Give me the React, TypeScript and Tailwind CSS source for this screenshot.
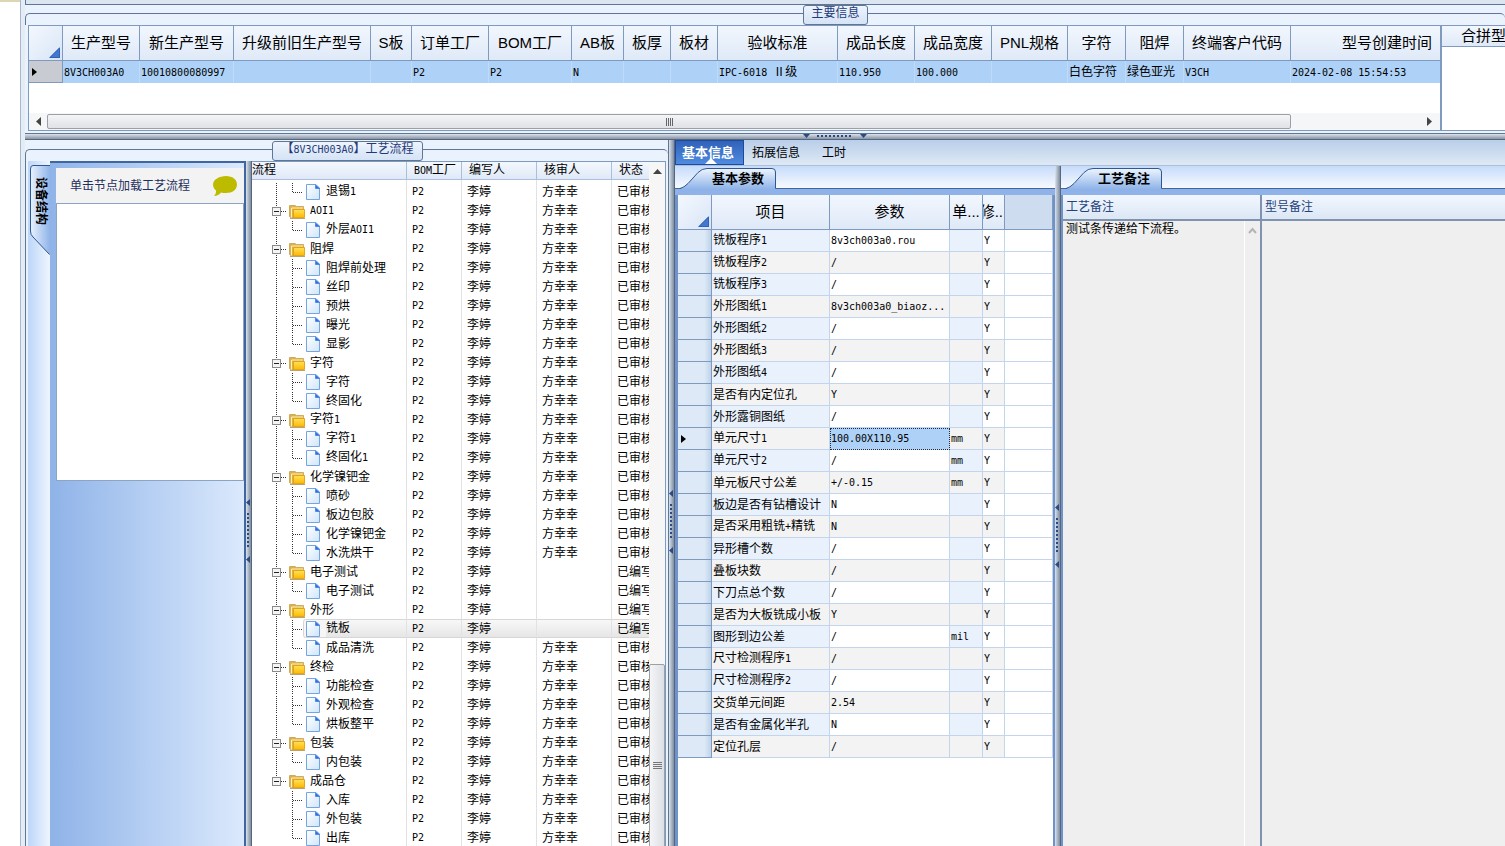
import React from "react";

const CJK = "font-['Liberation_Sans','Noto_Sans_CJK_SC',sans-serif]";
const LINE = "border-[#7f9abf]";

/** Chinese text at 12px with Latin runs in a narrow fixed-width face. */
function Mixed({ children }: { children: string }) {
  const parts = children.split(/([\x20-\x7e]+)/).filter(Boolean);
  return (
    <>
      {parts.map((p, i) =>
        /^[\x20-\x7e]+$/.test(p) ? (
          <span key={i} className="font-['DejaVu_Sans_Mono',monospace] text-[10px] whitespace-pre">
            {p}
          </span>
        ) : (
          <span key={i}>{p}</span>
        ),
      )}
    </>
  );
}

function Corner() {
  return (
    <div className="flex h-full items-end justify-end p-[2px]">
      <svg width="11" height="11" viewBox="0 0 11 11" aria-hidden="true">
        <path d="M11 0V11H0Z" fill="#4478d0" />
        <path d="M10.5 1V10.5H1Z" fill="none" stroke="#2f62bb" />
      </svg>
    </div>
  );
}

function RowMarker() {
  return (
    <svg width="5" height="8" viewBox="0 0 5 8" aria-hidden="true">
      <path d="M0 0L5 4L0 8Z" fill="#000" />
    </svg>
  );
}

function CaptionBar({ title, className }: { title: string; className: string }) {
  return (
    <div className="relative flex h-[20px] shrink-0">
      <div className="absolute inset-x-0 top-[8px] bottom-0 rounded-t-[5px] border-t border-l border-[#5f7794]" />
      <h2
        className={`relative flex h-5 justify-center rounded-[3px] border border-[#5f7794] bg-linear-to-b from-[#edf4fd] to-[#d5e3f5] text-[12px] leading-[14px] whitespace-nowrap text-[#1f3a78] ${className}`}
      >
        <span>
          <Mixed>{title}</Mixed>
        </span>
      </h2>
    </div>
  );
}

function VSplitter({ grip }: { grip: string }) {
  return (
    <div
      role="separator"
      aria-orientation="vertical"
      className="flex w-[6px] shrink-0 justify-center border-r border-[#56677d] bg-linear-to-r from-[#dce3eb] via-[#aab6c4] to-[#7f8d9f]"
    >
      <svg width="5" height="64" viewBox="0 0 5 64" className={`shrink-0 ${grip}`} aria-hidden="true">
        <path d="M4 0V7L0 3.5ZM4 57V64L0 60.5Z" fill="#2b4a84" />
        <path d="M2 14V50" stroke="#2b4a84" strokeWidth="2" strokeDasharray="2 2" />
      </svg>
    </div>
  );
}

const mainColumns: { name: string; col: string; value: string }[] = [
  { name: "生产型号", col: "w-[77px]", value: "8V3CH003A0" },
  { name: "新生产型号", col: "w-[94px]", value: "10010800080997" },
  { name: "升级前旧生产型号", col: "w-[137px]", value: "" },
  { name: "S板", col: "w-[41px]", value: "" },
  { name: "订单工厂", col: "w-[77px]", value: "P2" },
  { name: "BOM工厂", col: "w-[83px]", value: "P2" },
  { name: "AB板", col: "w-[52px]", value: "N" },
  { name: "板厚", col: "w-[47px]", value: "" },
  { name: "板材", col: "w-[47px]", value: "" },
  { name: "验收标准", col: "w-[120px]", value: "IPC-6018 Ⅱ级" },
  { name: "成品长度", col: "w-[77px]", value: "110.950" },
  { name: "成品宽度", col: "w-[77px]", value: "100.000" },
  { name: "PNL规格", col: "w-[76px]", value: "" },
  { name: "字符", col: "w-[58px]", value: "白色字符" },
  { name: "阻焊", col: "w-[58px]", value: "绿色亚光" },
  { name: "终端客户代码", col: "w-[107px]", value: "V3CH" },
  { name: "型号创建时间", col: "w-[149px]", value: "2024-02-08 15:54:53" },
];

function MainInfo() {
  return (
    <section className="flex shrink-0 flex-col border-t border-b border-[#5f7794] bg-[#eaf3fd]">
      <CaptionBar title="主要信息" className="ml-[778px] w-[65px]" />
      <div className="flex h-[106px] overflow-hidden pl-[3px]">
        <div className={`flex w-[1414px] shrink-0 flex-col border border-r-2 bg-white ${LINE}`}>
          <table className="w-[1411px] table-fixed border-separate border-spacing-0">
            <colgroup>
              <col className="w-[34px]" />
              {mainColumns.map((c) => (
                <col key={c.name} className={c.col} />
              ))}
            </colgroup>
            <thead>
              <tr className="h-[35px]">
                <th className={`h-[35px] border-r border-b bg-linear-to-br from-[#f4f8fe] to-[#d8e5f6] p-0 ${LINE}`}>
                  <Corner />
                </th>
                {mainColumns.map((c, i) => (
                  <th
                    key={c.name}
                    className={`h-[35px] border-r border-b bg-linear-to-b from-[#f2f7fe] to-[#dfe9f7] p-0 text-[15px] leading-5 font-normal whitespace-nowrap last:border-r-0 ${LINE} ${
                      i === mainColumns.length - 1 ? "pr-2 text-right" : "text-center"
                    }`}
                  >
                    {c.name}
                  </th>
                ))}
              </tr>
            </thead>
            <tbody>
              <tr>
                <td className={`h-[22px] border-r border-b bg-[#c8ccd2] p-0 pl-[3px] ${LINE}`}>
                  <RowMarker />
                </td>
                {mainColumns.map((c) => (
                  <td
                    key={c.name}
                    className="h-[22px] border-r border-[#c0dbf8] bg-[#aed2f7] p-0 pl-px text-[12px] leading-4 whitespace-nowrap last:border-r-0"
                  >
                    <Mixed>{c.value}</Mixed>
                  </td>
                ))}
              </tr>
            </tbody>
          </table>
          <div className="flex-1" />
          <div className="flex h-[17px] items-stretch bg-[#f5f6f8]">
            <button aria-label="向左滚动" className="flex w-[18px] items-center justify-center">
              <svg width="5" height="9" viewBox="0 0 5 9" aria-hidden="true">
                <path d="M5 0V9L0 4.500Z" fill="#444" />
              </svg>
            </button>
            <div className="my-px flex w-[1244px] items-center justify-center gap-px rounded-[2px] border border-[#9aa0a8] bg-linear-to-b from-[#f4f5f7] to-[#dfe2e6]">
              {[0, 1, 2, 3].map((i) => (
                <i key={i} className="h-2 w-px bg-[#666]" />
              ))}
            </div>
            <div className="flex-1" />
            <button aria-label="向右滚动" className="flex w-[21px] items-center justify-center">
              <svg width="5" height="9" viewBox="0 0 5 9" aria-hidden="true">
                <path d="M0 0V9L5 4.500Z" fill="#444" />
              </svg>
            </button>
          </div>
        </div>
        <div className={`min-w-0 flex-1 overflow-hidden border-t border-b bg-white ${LINE}`}>
          <div className={`h-[21px] border-b bg-linear-to-b from-[#f2f7fe] to-[#dfe9f7] pl-[19px] text-[15px] leading-5 whitespace-nowrap ${LINE}`}>
            合拼型号
          </div>
        </div>
      </div>
      <div className="h-[2px]" />
    </section>
  );
}

function HSplitter() {
  return (
    <div
      role="separator"
      aria-orientation="horizontal"
      className="flex h-[6px] shrink-0 items-center border-b border-[#56677d] bg-linear-to-b from-[#dce3eb] to-[#8894a4] pl-[778px]"
    >
      <svg width="64" height="5" viewBox="0 0 64 5" aria-hidden="true">
        <path d="M0 0H7L3.500 4ZM57 0H64L60.500 4Z" fill="#2b4a84" />
        <path d="M14 2H50" stroke="#2b4a84" strokeWidth="2" strokeDasharray="2 2" />
      </svg>
    </div>
  );
}

type Step = { name: string; group?: boolean; reviewer?: string; status?: string; selected?: boolean };

const R = "方幸幸";
const steps: Step[] = [
  { name: "退锡1", reviewer: R },
  { name: "AOI1", group: true, reviewer: R },
  { name: "外层AOI1", reviewer: R },
  { name: "阻焊", group: true, reviewer: R },
  { name: "阻焊前处理", reviewer: R },
  { name: "丝印", reviewer: R },
  { name: "预烘", reviewer: R },
  { name: "曝光", reviewer: R },
  { name: "显影", reviewer: R },
  { name: "字符", group: true, reviewer: R },
  { name: "字符", reviewer: R },
  { name: "终固化", reviewer: R },
  { name: "字符1", group: true, reviewer: R },
  { name: "字符1", reviewer: R },
  { name: "终固化1", reviewer: R },
  { name: "化学镍钯金", group: true, reviewer: R },
  { name: "喷砂", reviewer: R },
  { name: "板边包胶", reviewer: R },
  { name: "化学镍钯金", reviewer: R },
  { name: "水洗烘干", reviewer: R },
  { name: "电子测试", group: true, status: "已编写" },
  { name: "电子测试", status: "已编写" },
  { name: "外形", group: true, status: "已编写" },
  { name: "铣板", status: "已编写", selected: true },
  { name: "成品清洗", reviewer: R },
  { name: "终检", group: true, reviewer: R },
  { name: "功能检查", reviewer: R },
  { name: "外观检查", reviewer: R },
  { name: "烘板整平", reviewer: R },
  { name: "包装", group: true, reviewer: R },
  { name: "内包装", reviewer: R },
  { name: "成品仓", group: true, reviewer: R },
  { name: "入库", reviewer: R },
  { name: "外包装", reviewer: R },
  { name: "出库", reviewer: R },
];
const lastGroup = steps.map((s) => !!s.group).lastIndexOf(true);

function GroupLead({ last }: { last: boolean }) {
  return (
    <svg width="58" height="19" viewBox="0 0 58 19" aria-hidden="true">
      <path d={last ? "M24.500 0V9" : "M24.500 0V19"} stroke="#333" strokeDasharray="1 1" />
      <path d="M29 10.500H35" stroke="#333" strokeDasharray="1 1" />
      <rect x="20.500" y="6.500" width="8" height="8" fill="#f4f4f4" stroke="#8b8b8b" />
      <path d="M22 10.500H27" stroke="#222" />
      <path d="M37.500 15.500V4.500H43L44.500 5.500H51.500V9H42V16.500H38.500Z" fill="#dcb04a" stroke="#c9a04a" strokeWidth=".8" />
      <path d="M39.500 16.500V7H51" fill="none" stroke="#fff3b8" />
      <path d="M41.500 8.500H52.500V16.500H41.500Z" fill="url(#folderFront)" stroke="#e0a010" strokeWidth=".9" />
      <path d="M38 17.500H53" stroke="#a88a55" strokeWidth=".8" />
    </svg>
  );
}

function LeafLead({ end, root, selected }: { end: boolean; root: boolean; selected: boolean }) {
  return (
    <svg width="74" height="19" viewBox="0 0 74 19" className="shrink-0" aria-hidden="true">
      {selected && (
        <>
          <path d="M74 .5H53.500Q51.500 .5 51.500 2.500V16.500Q51.500 18.500 53.500 18.500H74Z" fill="#f6f6f6" />
          <path d="M74 .5H53.500Q51.500 .5 51.500 2.500V16.500Q51.500 18.500 53.500 18.500H74" fill="none" stroke="#d6d6d6" />
        </>
      )}
      {root && <path d="M24.500 1V19" stroke="#333" strokeDasharray="1 1" />}
      <path d={end ? "M40.500 1V11" : "M40.500 1V19"} stroke="#333" strokeDasharray="1 1" />
      <path d="M41 10.500H51" stroke="#333" strokeDasharray="1 1" />
      <path d="M54.500 2.500H64L67.500 6V17.500H54.500Z" fill="url(#pageFill)" stroke="#74a5e2" />
      <path d="M63.500 3V6.500H67.500Z" fill="#2f6fe0" stroke="#2f6fe0" strokeWidth=".6" />
    </svg>
  );
}

function ProcessTree() {
  return (
    <div className="flex min-w-0 flex-1 overflow-hidden border-t border-r border-[#7f9abf] bg-white">
      <svg width="0" height="0" className="absolute" aria-hidden="true">
        <defs>
          <linearGradient id="folderFront" x1="0" y1="0" x2="0" y2="1">
            <stop offset="0" stopColor="#ffe25a" />
            <stop offset="1" stopColor="#ffb800" />
          </linearGradient>
          <linearGradient id="pageFill" x1="0" y1="0" x2="1" y2="1">
            <stop offset="0" stopColor="#ffffff" />
            <stop offset="1" stopColor="#cfe5fb" />
          </linearGradient>
        </defs>
      </svg>
      <div className="min-w-0 flex-1 overflow-hidden">
        <table className="w-full table-fixed border-separate border-spacing-0 text-[12px] leading-4">
          <colgroup>
            <col className="w-[155px]" />
            <col className="w-[55px]" />
            <col className="w-[75px]" />
            <col className="w-[75px]" />
            <col />
          </colgroup>
          <thead>
            <tr>
              {["流程", "BOM工厂", "编写人", "核审人", "状态"].map((h) => (
                <th
                  key={h}
                  className="h-[18px] overflow-hidden border-r border-b border-[#a9bfdc] bg-linear-to-b from-[#f4f8fe] to-[#dfe9f6] p-0 pl-[7px] text-left leading-[15px] font-normal whitespace-nowrap first:pl-0 last:border-r-0"
                >
                  <Mixed>{h}</Mixed>
                </th>
              ))}
            </tr>
          </thead>
          <tbody>
            <tr aria-hidden="true">
              <td className="h-[2px] border-r border-[#e2e2e2] p-0" />
              <td className="border-r border-[#e2e2e2] p-0" />
              <td className="border-r border-[#e2e2e2] p-0" />
              <td className="border-r border-[#e2e2e2] p-0" />
              <td className="p-0" />
            </tr>
            {steps.map((s, i) => {
              const end = i === steps.length - 1 || !!steps[i + 1].group;
              const hl = s.selected ? "border-y border-y-[#d6d6d6] bg-linear-to-b from-[#f8f8f8] to-[#e6e6e6]" : "";
              const cell = `h-[19px] overflow-hidden border-r border-r-[#e2e2e2] p-0 pl-[5px] whitespace-nowrap ${hl}`;
              return (
                <tr key={i}>
                  <td className="h-[19px] overflow-hidden border-r border-[#e2e2e2] p-0">
                    <div className="flex h-[19px] items-center whitespace-nowrap">
                      {s.group ? (
                        <button aria-label={`收起 ${s.name}`} className="shrink-0">
                          <GroupLead last={i === lastGroup} />
                        </button>
                      ) : (
                        <LeafLead end={end} root={i < lastGroup} selected={!!s.selected} />
                      )}
                      <span
                        className={
                          s.selected
                            ? "h-[19px] flex-1 border-y border-[#d6d6d6] bg-linear-to-b from-[#f8f8f8] to-[#e6e6e6]"
                            : ""
                        }
                      >
                        <Mixed>{s.name}</Mixed>
                      </span>
                    </div>
                  </td>
                  <td className={cell}>
                    <Mixed>P2</Mixed>
                  </td>
                  <td className={cell}>李婷</td>
                  <td className={cell}>{s.reviewer}</td>
                  <td className={`h-[19px] overflow-hidden p-0 pl-[5px] whitespace-nowrap ${hl}`}>
                    {s.status ?? "已审核"}
                  </td>
                </tr>
              );
            })}
          </tbody>
        </table>
      </div>
      <div className="flex w-4 shrink-0 flex-col bg-[#f6f6f7]">
        <button aria-label="向上滚动" className="flex h-[18px] shrink-0 items-center justify-center">
          <svg width="9" height="5" viewBox="0 0 9 5" aria-hidden="true">
            <path d="M0 5H9L4.500 0Z" fill="#444" />
          </svg>
        </button>
        <div className="h-[484px] shrink-0" />
        <div className="flex h-[202px] shrink-0 flex-col items-center justify-center gap-px rounded-[2px] border border-[#9aa0a8] bg-linear-to-r from-[#f4f5f7] to-[#dcdfe4]">
          {[0, 1, 2, 3].map((i) => (
            <i key={i} className="h-px w-[9px] bg-[#777]" />
          ))}
        </div>
      </div>
    </div>
  );
}

function DevicePanel() {
  return (
    <>
      <div className="w-[22px] shrink-0 bg-linear-to-r from-[#bdd6fa] to-[#eef5fe]">
        <button className="relative flex h-[94px] w-[22px] justify-center pt-[16px] pl-[4px] text-start">
          <svg className="absolute inset-0" width="22" height="94" viewBox="0 0 22 94" aria-hidden="true">
            <path d="M22 4.500H5Q2.500 4.500 2.500 8V70Q2.500 74 5 76L21.500 93.500H22Z" fill="url(#sideTab)" />
            <path d="M22 4.500H5Q2.500 4.500 2.500 8V70Q2.500 74 5 76L21.500 93.500" fill="none" stroke="#2f5792" />
            <defs>
              <linearGradient id="sideTab" x1="0" y1="0" x2="1" y2="0">
                <stop offset="0" stopColor="#e9f2fe" />
                <stop offset="1" stopColor="#8fb4e8" />
              </linearGradient>
            </defs>
          </svg>
          <span className="relative text-[12px] leading-[18px] font-bold [text-orientation:sideways] [writing-mode:vertical-rl]">
            设备结构
          </span>
        </button>
      </div>
      <div className="flex w-[196px] shrink-0 flex-col border-t-2 border-r-2 border-[#3f669f] bg-linear-to-r from-[#8fb3e8] to-[#dbe9fc] pt-[5px] pl-[6px]">
        <div className="flex h-[35px] shrink-0 items-center justify-between bg-[#f3f3f3] pr-[6px] pl-[14px]">
          <span className="text-[12px] leading-4 text-[#1f2f5c]">单击节点加载工艺流程</span>
          <svg width="26" height="22" viewBox="0 0 26 22" aria-hidden="true">
            <path d="M14 1C20.500 1 25 4.500 25 9.500S20.500 18 14 18C12.500 18 10 17.800 9 17.400C7.500 19.500 5 20.900 2 21C3.500 19.500 4.300 17.500 4 15.500C2 13.800 1 12 1 9.500C1 4.500 7.500 1 14 1Z" fill="#bdbb00" />
          </svg>
        </div>
        <div className="h-[278px] shrink-0 border border-[#8da5c4] bg-white" />
      </div>
    </>
  );
}

type Param = [name: string, value: string, unit?: string];
const params: Param[] = [
  ["铣板程序1", "8v3ch003a0.rou"],
  ["铣板程序2", "/"],
  ["铣板程序3", "/"],
  ["外形图纸1", "8v3ch003a0_biaoz..."],
  ["外形图纸2", "/"],
  ["外形图纸3", "/"],
  ["外形图纸4", "/"],
  ["是否有内定位孔", "Y"],
  ["外形露铜图纸", "/"],
  ["单元尺寸1", "100.00X110.95", "mm"],
  ["单元尺寸2", "/", "mm"],
  ["单元板尺寸公差", "+/-0.15", "mm"],
  ["板边是否有钻槽设计", "N"],
  ["是否采用粗铣+精铣", "N"],
  ["异形槽个数", "/"],
  ["叠板块数", "/"],
  ["下刀点总个数", "/"],
  ["是否为大板铣成小板", "Y"],
  ["图形到边公差", "/", "mil"],
  ["尺寸检测程序1", "/"],
  ["尺寸检测程序2", "/"],
  ["交货单元间距", "2.54"],
  ["是否有金属化半孔", "N"],
  ["定位孔层", "/"],
];
const currentParam = 9;

function SlantTab({ title, className }: { title: string; className: string }) {
  return (
    <div className="flex h-[23px] shrink-0 border-b border-[#3f669f] bg-linear-to-b from-[#c6dbfb] to-[#f7fafe]">
      <button
        role="tab"
        aria-selected="true"
        className={`relative -mb-px h-[23px] w-[98px] pt-[3px] pl-[33px] text-left text-[13px] leading-[18px] font-bold whitespace-nowrap ${className}`}
      >
        <svg className="absolute inset-0" width="98" height="23" viewBox="0 0 98 23" aria-hidden="true">
          <path d="M1 23Q5 21.500 9 17.500L19 6.500Q23 2.500 28 2.500H93Q96.500 2.500 96.500 6V23Z" fill="url(#slantFill)" />
          <path d="M1 22.500Q5 21.500 9 17.500L19 6.500Q23 2.500 28 2.500H93Q96.500 2.500 96.500 6V22.500" fill="none" stroke="#2f5792" />
          <defs>
            <linearGradient id="slantFill" x1="0" y1="0" x2="0" y2="1">
              <stop offset="0" stopColor="#eef5fe" />
              <stop offset="1" stopColor="#8fb4e8" />
            </linearGradient>
          </defs>
        </svg>
        <span className="relative">{title}</span>
      </button>
    </div>
  );
}

function ParamGrid() {
  const head = `h-[35px] overflow-hidden border-r border-b p-0 text-[15px] leading-5 font-normal whitespace-nowrap ${LINE}`;
  const headFill = "bg-linear-to-b from-[#f2f7fe] to-[#dfe9f7]";
  const body = "h-[22px] overflow-hidden border-r border-b border-[#c3d5ec] p-0 pl-px leading-4 whitespace-nowrap";
  return (
    <section className="flex w-[380px] shrink-0 flex-col">
      <SlantTab title="基本参数" className="ml-[4px]" />
      <div className="h-[6px] shrink-0 bg-[#8fb3e8]" />
      <div className="min-h-0 flex-1 overflow-hidden border-r-2 border-l-3 border-[#6f93c8] bg-white">
        <table className="w-full table-fixed border-separate border-spacing-0 text-[12px]">
          <colgroup>
            <col className="w-[34px]" />
            <col className="w-[118px]" />
            <col className="w-[120px]" />
            <col className="w-[33px]" />
            <col className="w-[22px]" />
            <col />
          </colgroup>
          <thead>
            <tr className="h-[35px]">
              <th className={`${head} bg-linear-to-br from-[#f4f8fe] to-[#d8e5f6]`}>
                <Corner />
              </th>
              <th className={`${head} ${headFill}`}>项目</th>
              <th className={`${head} ${headFill}`}>参数</th>
              <th className={`${head} ${headFill}`}>单...</th>
              <th className={`${head} ${headFill}`}>
                <span className="flex justify-end overflow-hidden pr-px">修..</span>
              </th>
              <th className={`${head} bg-[#cddcef]`} aria-label="空列" />
            </tr>
          </thead>
          <tbody>
            {params.map(([name, value, unit], i) => {
              const odd = i % 2 === 1;
              return (
                <tr key={name}>
                  <td
                    className={`h-[22px] border-r border-b bg-linear-to-r from-[#dde9f6] from-80% to-[#bfd3ea] p-0 pl-[3px] ${LINE}`}
                  >
                    {i === currentParam && <RowMarker />}
                  </td>
                  <td className={`${body} ${odd ? "bg-[#f3f3f3]" : "bg-[#e8f1fc]"}`}>
                    <Mixed>{name}</Mixed>
                  </td>
                  <td
                    className={`${body} ${
                      i === currentParam
                        ? "bg-[#aed2f7] outline outline-dotted -outline-offset-1 outline-[#1c2f4f]"
                        : odd
                          ? "bg-[#f3f3f3]"
                          : "bg-white"
                    }`}
                  >
                    <Mixed>{value}</Mixed>
                  </td>
                  <td className={`${body} ${odd ? "bg-[#f3f3f3]" : "bg-[#e8f1fc]"}`}>
                    <Mixed>{unit ?? ""}</Mixed>
                  </td>
                  <td className={`${body} ${odd ? "bg-[#f3f3f3]" : "bg-white"}`}>
                    <Mixed>Y</Mixed>
                  </td>
                  <td className={`${body} bg-white`} />
                </tr>
              );
            })}
          </tbody>
        </table>
      </div>
    </section>
  );
}

function Notes() {
  const label =
    "block h-[26px] shrink-0 border-b-2 border-[#7f93ae] bg-linear-to-b from-[#f2f7fe] to-[#dce7f5] pl-[3px] text-[12px] leading-[24px] text-[#24427a]";
  const area =
    "min-h-0 min-w-0 flex-1 resize-none bg-[#efefef] pl-[3px] text-[12px] leading-4 text-black outline-none";
  return (
    <section className="flex min-w-0 flex-1 flex-col">
      <SlantTab title="工艺备注" className="ml-[4px]" />
      <div className="h-[6px] shrink-0 bg-[#8fb3e8]" />
      <div className="flex min-h-0 flex-1 border-l-2 border-[#6f93c8]">
        <div className="flex w-[199px] shrink-0 flex-col border-r-2 border-[#7f93ae]">
          <label htmlFor="process-note" className={label}>
            工艺备注
          </label>
          <div className="flex min-h-0 flex-1 bg-[#efefef]">
            <textarea id="process-note" readOnly defaultValue="测试条传递给下流程。" className={area} />
            <button aria-label="向上滚动" className="flex w-4 items-start justify-center border-l border-white pt-[6px]">
              <svg width="9" height="7" viewBox="0 0 9 7" aria-hidden="true">
                <path d="M1 6L4.500 2L8 6" fill="none" stroke="#b4b4b4" strokeWidth="2" />
              </svg>
            </button>
          </div>
        </div>
        <div className="flex min-w-0 flex-1 flex-col">
          <label htmlFor="model-note" className={label}>
            型号备注
          </label>
          <textarea id="model-note" readOnly className={area} />
        </div>
      </div>
    </section>
  );
}

export default function App() {
  return (
    <div className={`flex h-screen overflow-hidden bg-[#dbe5f1] text-black ${CJK}`}>
      <div className="w-5 shrink-0 border-t-2 border-[#ddd6b4] bg-white" />
      <div className="w-[6px] shrink-0 border-r border-l border-r-[#5f7794] border-l-[#a9b8ca] bg-[#e4ecf5]" />
      <main className="-ml-px flex min-w-0 flex-1 flex-col pt-1">
        <MainInfo />
        <HSplitter />
        <div className="flex min-h-0 flex-1">
          <section className="flex w-[644px] shrink-0 flex-col border-r border-[#5f7794] bg-[#eaf3fd]">
            <div className="h-px shrink-0" />
            <CaptionBar title="【8V3CH003A0】工艺流程" className="ml-[247px] w-[151px]" />
            <div className="flex min-h-0 flex-1 border-l border-[#5f7794] pr-[2px] pl-[2px]">
              <DevicePanel />
              <VSplitter grip="mt-[338px]" />
              <ProcessTree />
            </div>
          </section>
          <VSplitter grip="mt-[350px]" />
          <div className="flex min-w-0 flex-1 flex-col">
            <nav
              role="tablist"
              className="flex h-[26px] shrink-0 border-b border-[#a9bfdc] bg-linear-to-b from-[#b9cee9] to-[#dfe9f5] text-[12px] leading-[24px]"
            >
              <button
                role="tab"
                aria-selected="true"
                className="relative w-[69px] border border-[#1d4a9c] bg-linear-to-b from-[#2f62b8] to-[#4f8be0] pr-[3px] text-[13px] leading-[22px] font-bold text-white"
              >
                基本信息
                <svg className="absolute bottom-0 left-[29px]" width="12" height="6" viewBox="0 0 12 6" aria-hidden="true">
                  <path d="M0 6L6 0L12 6Z" fill="#fff" />
                </svg>
              </button>
              <button role="tab" aria-selected="false" className="px-2">
                拓展信息
              </button>
              <button role="tab" aria-selected="false" className="px-[14px]">
                工时
              </button>
            </nav>
            <div className="flex min-h-0 flex-1">
              <ParamGrid />
              <VSplitter grip="mt-[338px]" />
              <Notes />
            </div>
          </div>
        </div>
      </main>
    </div>
  );
}
